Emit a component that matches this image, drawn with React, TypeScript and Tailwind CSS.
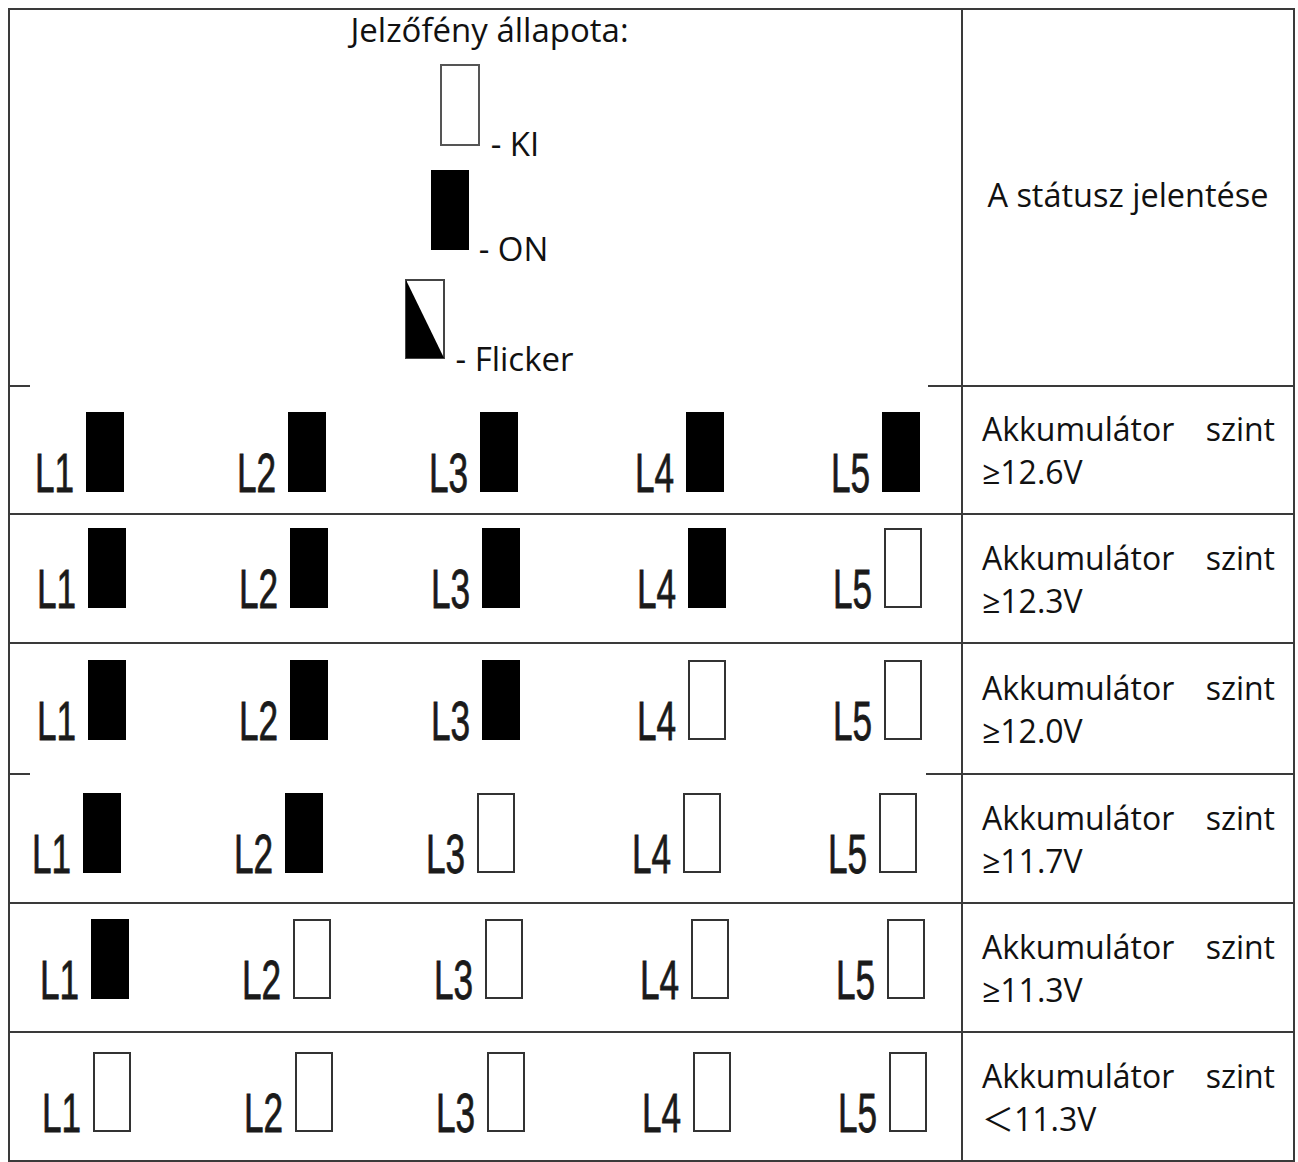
import React from 'react';

type Row = {
  on: number;
  value: string;
  height: string;
  padTop: string;
  padLeft: string;
  broken: boolean;
};

const ROWS: Row[] = [
  { on: 5, value: '≥12.6V', height: 'h-[128px]', padTop: 'pt-[25px]', padLeft: 'pl-[24px]', broken: true },
  { on: 4, value: '≥12.3V', height: 'h-[129px]', padTop: 'pt-[13px]', padLeft: 'pl-[26px]', broken: false },
  { on: 3, value: '≥12.0V', height: 'h-[131px]', padTop: 'pt-[16px]', padLeft: 'pl-[26px]', broken: false },
  { on: 2, value: '≥11.7V', height: 'h-[129px]', padTop: 'pt-[18px]', padLeft: 'pl-[21px]', broken: true },
  { on: 1, value: '≥11.3V', height: 'h-[129px]', padTop: 'pt-[15px]', padLeft: 'pl-[29px]', broken: false },
  { on: 0, value: '＜11.3V', height: 'h-[129px]', padTop: 'pt-[19px]', padLeft: 'pl-[31px]', broken: false },
];

// spacing between the five LED groups, as in the printed manual
const GAPS = ['', 'ml-[112px]', 'ml-[102px]', 'ml-[116px]', 'ml-[106px]'];

const TEXT_FONT = "font-['Open_Sans','Noto_Sans_CJK_SC',sans-serif]";

function Led({ on }: { on: boolean }) {
  return on ? (
    <div className="w-[38px] h-[80px] bg-black shrink-0" />
  ) : (
    <div className="w-[38px] h-[80px] border-2 border-[#333] bg-white shrink-0" />
  );
}

function LedGroup({ n, on, className }: { n: number; on: boolean; className: string }) {
  return (
    <div className={`flex items-end gap-[12px] ${className}`}>
      <div className="w-[40px] flex justify-end">
        <span className="shrink-0 whitespace-nowrap font-['Liberation_Sans',Arial,sans-serif] text-[55px] leading-none text-[#1a1a1a] [-webkit-text-stroke:0.8px_#1a1a1a] scale-x-[0.64] origin-right -mb-[9px]">
          L{n}
        </span>
      </div>
      <Led on={on} />
    </div>
  );
}

function BrokenLine({ right }: { right: string }) {
  return (
    <div className="flex h-[2px] shrink-0">
      <div className="w-[20px] bg-[#3a3a3a]" />
      <div className="flex-1" />
      <div className={`${right} bg-[#3a3a3a]`} />
    </div>
  );
}

export default function App() {
  return (
    <div className="bg-white w-[1298px] h-[1162px] pt-[8px] pl-[8px]">
      <div className={`w-[1287px] border-2 border-b-0 border-[#3a3a3a] text-[#111] ${TEXT_FONT}`}>
        {/* header */}
        <div className="flex h-[375px]">
          <div className="w-[953px] border-r-2 border-[#3a3a3a] flex flex-col items-center">
            <div className="text-[33px] leading-[44px] ml-[8px] -mt-[2px]">Jelzőfény állapota:</div>
            <div className="flex flex-col items-center mt-[12px] ml-[8px]">
              <div className="flex items-end gap-[11px]">
                <div className="w-[40px] h-[82px] border-2 border-[#555] bg-white" />
                <span className="text-[33px] leading-none -mb-[14px]">- KI</span>
              </div>
              <div className="flex items-end gap-[10px] mt-[24px]">
                <div className="w-[38px] h-[80px] bg-black" />
                <span className="text-[33px] leading-none -mb-[15px]">- ON</span>
              </div>
              <div className="flex items-end gap-[10px] mt-[29px]">
                <svg width="40" height="80" viewBox="0 0 40 80" className="block">
                  <rect x="1" y="1" width="38" height="78" fill="white" stroke="#444" strokeWidth="2" />
                  <polygon points="1,1 1,79 39,79" fill="black" />
                </svg>
                <span className="text-[33px] leading-none -mb-[16px]">- Flicker</span>
              </div>
            </div>
          </div>
          <div className="flex-1 flex items-center justify-center pb-[4px]">
            <span className="text-[32.5px] leading-none">A státusz jelentése</span>
          </div>
        </div>

        {ROWS.map((row, i) => (
          <div key={i} className={`flex ${row.height}`}>
            <div className="w-[953px] border-r-2 border-[#3a3a3a] flex flex-col">
              {row.broken ? (
                <BrokenLine right={i === 0 ? 'w-[33px]' : 'w-[35px]'} />
              ) : (
                <div className="h-[2px] bg-[#3a3a3a] shrink-0" />
              )}
              <div className={`flex items-start ${row.padTop} ${row.padLeft}`}>
                {[1, 2, 3, 4, 5].map((n, j) => (
                  <LedGroup key={n} n={n} on={n <= row.on} className={GAPS[j]} />
                ))}
              </div>
            </div>
            <div className="flex-1 border-t-2 border-[#3a3a3a] flex items-center pl-[19px] pr-[18px]">
              <p className="w-full text-justify text-[32px] leading-[43px] [text-align-last:left]">
                Akkumulátor szint <span className="whitespace-nowrap">{row.value}</span>
              </p>
            </div>
          </div>
        ))}
        <div className="h-[2px] bg-[#3a3a3a]" />
      </div>
    </div>
  );
}
